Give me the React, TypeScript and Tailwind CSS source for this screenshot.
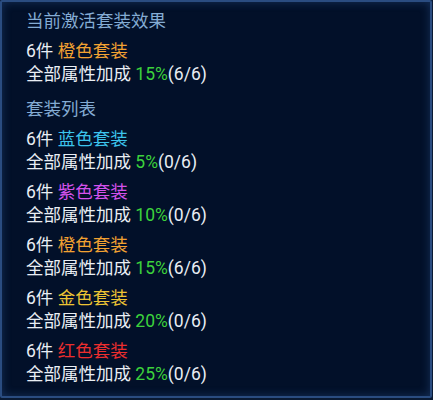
import React from 'react';

const sets = [
  { name: '蓝色套装', color: 'text-[#3cc4ec]', pct: '5%', count: '(0/6)' },
  { name: '紫色套装', color: 'text-[#d452ec]', pct: '10%', count: '(0/6)' },
  { name: '橙色套装', color: 'text-[#f2a232]', pct: '15%', count: '(6/6)' },
  { name: '金色套装', color: 'text-[#ecc434]', pct: '20%', count: '(0/6)' },
  { name: '红色套装', color: 'text-[#ec2e2e]', pct: '25%', count: '(0/6)' },
];

const SetBlock = ({ name, color, pct, count }: { name: string; color: string; pct: string; count: string }) => (
  <div className="flex flex-col">
    <div className="h-[23px] leading-[23px] text-[#e9eef4]">
      6件 <span className={color}>{name}</span>
    </div>
    <div className="h-[23px] leading-[23px] text-[#e9eef4]">
      全部属性加成 <span className="text-[#3cd23c]">{pct}</span>
      {count}
    </div>
  </div>
);

export default function App() {
  return (
    <div className="w-[433px] h-[400px] bg-[#0a1a33]">
      <div
        className="w-[432px] h-[398px] border-2 border-[#2a4c80] rounded-[2px] bg-[#021029] shadow-[inset_0_0_10px_rgba(60,110,180,0.35)] pl-[24px] pt-[8px] text-[17.5px]"
        style={{ fontFamily: 'Roboto, "Noto Sans CJK SC", sans-serif' }}
      >
        <div className="h-[23px] leading-[23px] text-[#84acd4]">当前激活套装效果</div>
        <div className="mt-[7px]">
          <SetBlock name="橙色套装" color="text-[#f2a232]" pct="15%" count="(6/6)" />
        </div>
        <div className="mt-[12px] h-[23px] leading-[23px] text-[#84acd4]">套装列表</div>
        <div className="mt-[7px] flex flex-col gap-[7px]">
          {sets.map((s) => (
            <SetBlock key={s.name} {...s} />
          ))}
        </div>
      </div>
    </div>
  );
}
